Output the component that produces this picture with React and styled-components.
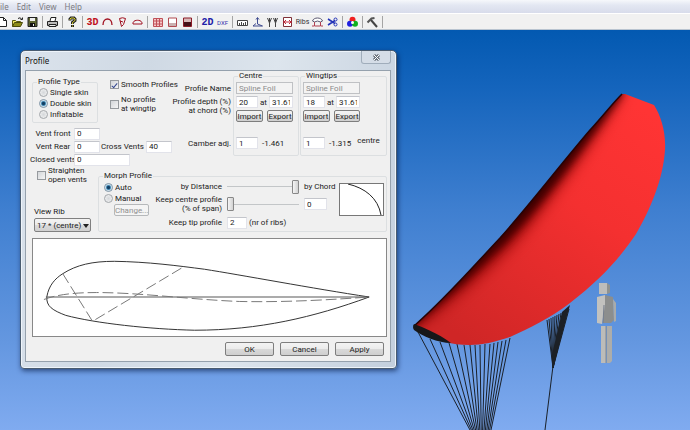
import React from "react";
import styled, { createGlobalStyle } from "styled-components";

const GlobalStyle = createGlobalStyle`
  *, *::before, *::after { box-sizing: border-box; }
  body {
    margin: 0;
    overflow: hidden;
    font-family: Roboto, "Liberation Sans", Arial, sans-serif;
    font-size: 8px;
    line-height: 9px;
    color: #222;
  }
  button, input, select { font: inherit; color: inherit; margin: 0; }
`;

const Page = styled.div`
  display: flex;
  flex-direction: column;
  min-height: 100vh;
`;

const MenuBar = styled.nav`
  display: flex;
  gap: 8px;
  height: 13px;
  padding-bottom: 1px;
  background: linear-gradient(#f6f8fb, #e3e7f2 40%, #d8dceb);
  font-family: "Noto Sans", sans-serif;
  font-size: 8px;
`;

const MenuItem = styled.button`
  border: 0;
  padding: 0;
  background: none;
  color: #7b7b80;
  line-height: 11px;
`;

const Toolbar = styled.div`
  display: flex;
  align-items: center;
  height: 17px;
  padding-top: 1px;
  background: #f1f1f1;
  border-top: 1px solid #fff;
  border-bottom: 1px solid #b9c4d0;
  overflow: hidden;
`;

const ToolButton = styled.button`
  flex: 0 0 15px;
  height: 14px;
  display: flex;
  align-items: center;
  justify-content: center;
  border: 0;
  padding: 0;
  background: none;
  &:first-child { margin-left: -5px; }
  svg { display: block; flex: none; }
`;

const ToolText = styled.span`
  font-family: ${(p) => (p.$mono ? '"Liberation Mono", monospace' : "inherit")};
  font-size: ${(p) => p.$size}px;
  font-weight: ${(p) => (p.$bold ? 700 : 400)};
  color: ${(p) => p.$color};
`;

const Divider = styled.span`
  flex: 0 0 5px;
  height: 12px;
  background: linear-gradient(#a5a5a5, #a5a5a5) 2px 0 / 1px 100% no-repeat;
`;

const Scene = styled.main`
  position: relative;
  flex: 1;
  background: linear-gradient(#0359b1, #1464bc 14%, #3f7fd0 45%, #6497e0 78%, #80abf0);
`;

const Drawing = styled.svg`
  display: block;
  width: 100%;
`;

const Dialog = styled.section`
  position: absolute;
  left: 20px;
  top: 20px;
  width: 377px;
  padding: 0 5px 6px 4px;
  border: 1px solid #4a5c70;
  border-radius: 5px 5px 4px 4px;
  background: linear-gradient(100deg, #dbe3ec, #cfd9e4 30%, #dde5ed 60%, #c3cfdd);
  box-shadow: inset 0 0 0 1px #eef4fa, 1px 2px 5px rgba(0, 20, 60, 0.6);
`;

const TitleBar = styled.header`
  display: flex;
  justify-content: space-between;
  height: 19px;
`;

const Title = styled.h1`
  margin: 0;
  font: 8px/19px "Noto Sans", sans-serif;
  color: #111;
`;

const CloseButton = styled.button`
  width: 30px;
  height: 13px;
  display: grid;
  place-items: center;
  padding: 0;
  border: 1px solid #a0adbb;
  border-top: 0;
  border-radius: 0 0 3px 3px;
  background: #d5dde7;
`;

const Client = styled.form`
  display: flex;
  flex-direction: column;
  padding: 0 3px 5px 6px;
  border: 1px solid #95a1ad;
  background: #f0f0f0;
`;

const Split = styled.div`
  display: flex;
  justify-content: space-between;
`;

const Group = styled.fieldset`
  min-width: 0;
  margin: 0;
  padding: 0 2px;
  border: 1px solid #dcdfe1;
  border-radius: 2px;
`;

const Legend = styled.legend`
  padding: 0 1px;
  margin-left: 2px;
  line-height: 10px;
`;

const Settings = styled.div`
  flex: 1;
  min-width: 0;
  padding-top: 6px;
`;

const TypeRow = styled.div`
  display: flex;
  gap: 12px;
`;

const TypeGroup = styled(Group)`
  flex: none;
  width: 66px;
  height: 46px;
  padding-left: 6px;
  legend { margin-left: -2px; }
`;

const Choice = styled.label`
  display: flex;
  align-items: center;
  gap: 2px;
  min-height: 11px;
  white-space: nowrap;
`;

const Radio = styled.input.attrs({ type: "radio" })`
  appearance: none;
  flex: none;
  width: 9px;
  height: 9px;
  border: 1px solid #a3a7ab;
  border-radius: 50%;
  background: radial-gradient(#d4d7da, #f6f6f6);
  &:checked {
    border-color: #7d93a5;
    background: radial-gradient(circle, #123f63 0 25%, #5a9cc4 45%, #e4eef4 65%);
  }
`;

const Checkbox = styled.input.attrs({ type: "checkbox" })`
  appearance: none;
  flex: none;
  display: grid;
  place-items: center;
  width: 9px;
  height: 9px;
  border: 1px solid #969a9e;
  background: linear-gradient(135deg, #d3d6d9, #f5f5f5);
  &:checked::after {
    content: "";
    width: 3px;
    height: 6px;
    border: solid #33478f;
    border-width: 0 1px 1px 0;
    transform: rotate(40deg);
  }
`;

const Checks = styled.div`
  display: flex;
  flex-direction: column;
  gap: 5px;
  padding-top: 2px;
`;

const Vents = styled.div`
  padding-top: 4px;
`;

const VentRow = styled.div`
  display: flex;
  align-items: center;
  height: 13px;
  white-space: nowrap;
`;

const VentLabel = styled.label`
  display: flex;
  flex: none;
  justify-content: center;
  width: 42px;
`;

const CrossLabel = styled.label`
  flex: none;
  width: 46px;
  padding-right: 2px;
  text-align: right;
`;

const Field = styled.input`
  flex: none;
  width: ${(p) => p.$w}px;
  height: 12px;
  padding: 0 2px;
  border: 1px solid #e2e3ea;
  border-top-color: #c3c5cb;
  border-radius: 0;
  background: #fff;
  &:disabled {
    border-color: #bfc1c4;
    background: #f3f3f3;
    color: #8b8b8b;
  }
`;

const Foils = styled.div`
  display: flex;
  flex: none;
  gap: 1px;
`;

const FoilLabels = styled.div`
  display: flex;
  flex-direction: column;
  align-items: flex-end;
  padding: 13px 1px 0 0;
  text-align: right;
  white-space: nowrap;
`;

const FoilLabel = styled.span`
  min-height: ${(p) => p.$h}px;
`;

const Foil = styled(Group)`
  flex: none;
  width: ${(p) => p.$w}px;
  height: 85px;
`;

const FoilRow = styled.div`
  display: flex;
  align-items: center;
  justify-content: space-between;
  width: 57px;
  height: 14px;
`;

const CamberRow = styled(FoilRow)`
  justify-content: flex-start;
  gap: 4px;
  width: auto;
  margin-top: 13px;
`;

const CentreNote = styled.span`
  align-self: flex-start;
  margin-left: 2px;
`;

const PushButton = styled.button`
  min-width: ${(p) => p.$w}px;
  height: ${(p) => (p.$tall ? 14 : 12)}px;
  padding: 0;
  border: 1px solid #7e7e7e;
  border-radius: 2px;
  background: linear-gradient(#f3f3f3, #ebebeb 50%, #d9d9d9 50%, #cfcfcf);
  line-height: 9px;
  &:disabled {
    border-color: #b5b8ba;
    background: #f4f4f4;
    color: #909090;
  }
`;

const Side = styled.div`
  display: flex;
  flex-direction: column;
  justify-content: space-between;
  width: 66px;
`;

const StraightenBox = styled.div`
  padding-left: 5px;
`;

const RibPicker = styled.label`
  display: block;
  padding-left: 2px;
`;

const SelectShell = styled.span`
  position: relative;
  display: block;
  width: 57px;
  margin-top: 2px;
  &::after {
    content: "";
    position: absolute;
    right: 2px;
    top: 6px;
    border: 3px solid transparent;
    border-top: 4px solid #222;
    border-bottom: 0;
    pointer-events: none;
  }
`;

const Select = styled.select`
  appearance: none;
  display: block;
  width: 100%;
  height: 14px;
  padding: 0 2px;
  border: 1px solid #808080;
  border-radius: 2px;
  background: linear-gradient(#f3f3f3, #ebebeb 50%, #dadada 50%, #d0d0d0);
`;

const Morph = styled(Group)`
  flex: 1;
  height: 61px;
  margin-top: 5px;
`;

const MorphBody = styled.div`
  display: flex;
  gap: 5px;
  padding: 0 0 0 3px;
`;

const Modes = styled.div`
  padding-top: 1px;
  margin-right: auto;
  button { margin-left: 10px; }
`;

const MorphGrid = styled.div`
  display: grid;
  grid-template-columns: auto 72px 30px;
  grid-template-rows: 11px 24px 13px;
  align-items: center;
  column-gap: 5px;
  white-space: nowrap;
`;

const GridLabel = styled.label`
  text-align: right;
`;

const Slider = styled.input.attrs({ type: "range" })`
  appearance: none;
  width: 72px;
  height: 13px;
  background: linear-gradient(#c3c6c8, #c3c6c8) 0 50% / 100% 1px no-repeat;
  &::-webkit-slider-thumb {
    appearance: none;
    width: 7px;
    height: 14px;
    border: 1px solid #888;
    border-radius: 1px;
    background: linear-gradient(90deg, #f5f5f5, #d2d2d2);
  }
`;

const TipRow = styled.span`
  grid-column: 2 / 4;
  display: flex;
  align-items: center;
  gap: 2px;
`;

const CurveBox = styled.svg`
  flex: none;
  width: 45px;
  height: 33px;
  margin-top: 2px;
  border: 1px solid #777;
  background: #fff;
`;

const ProfileChart = styled.svg`
  display: block;
  width: 100%;
  margin-top: 6px;
  border: 1px solid #888;
  background: #fff;
`;

const Actions = styled.footer`
  display: flex;
  justify-content: flex-end;
  gap: 6px;
  padding: 5px 3px 0 0;
`;

const Icon = ({ children, w = 13 }) => (
  <svg width={w} height="12" viewBox={`0 0 ${w} 12`} fill="none" stroke="#222" aria-hidden="true">
    {children}
  </svg>
);

const RED = "#a01020";

const tools = [
  ["New", <Icon><path d="M2.5 1.5h5l3 3v6h-8z" fill="#fff" /><path d="M7.5 1.5v3h3" /></Icon>],
  ["Open", <Icon><path d="M1.5 10.500V4.500h3l1 1h4v2" fill="#f0e860" stroke="#5a5a10" /><path d="M1.500 10.500l2-4h8l-2 4z" fill="#8c8c18" stroke="#4a4a08" /><path d="M7 2.500q2-2 4 1M11.500 1.500v2h-2" /></Icon>],
  ["Save", <Icon><path d="M2 1.500h9v9H2z" fill="#5c6430" /><path d="M4 2h5v3H4z" fill="#eee" stroke="none" /><path d="M4 7h5v4H4z" fill="#111" stroke="none" /><path d="M7 8h1v2H7z" fill="#eee" stroke="none" /></Icon>],
  null,
  ["Print", <Icon><path d="M4 5l1-3.500h5L9 5" fill="#fff" /><path d="M1.500 5.500h10v4h-10z" fill="#bbb" /><path d="M3 8.500h7v2H3z" fill="#eee" /></Icon>],
  null,
  ["Help", <Icon><path d="M4 4.500V3l1-1h3l1 1v1.500L6.500 6.500V8M6.500 9v2" stroke="#222" strokeWidth="3" /><path d="M4 4V3l1-1h3l1 1v1.500L6.500 6.500V8M6.500 9.500v1" stroke="#d8cf30" strokeWidth="1" /></Icon>],
  null,
  ["3D view", <ToolText $size={10} $bold $mono $color="#c01020">3D</ToolText>],
  ["Arc", <Icon><path d="M2 9c0-8 9-8 9 0" stroke={RED} strokeWidth="1.300" /></Icon>],
  ["Section", <Icon><path d="M3.500 2.500q3-1.500 6 0l-2 6-2 2zM4 5l3 1" stroke={RED} /></Icon>],
  ["Planform", <Icon><path d="M2 8C1 3 12 3 11 8z" stroke={RED} /></Icon>],
  null,
  ["Panels", <Icon><path d="M2.500 2.500h9v8h-9zM2.500 5h9M2.500 8h9M5.500 2.500v8M8.500 2.500v8" fill="#f6c8c8" stroke="#c05058" /></Icon>],
  ["Upper surface", <Icon><path d="M2.500 2h8v8.500h-8z" fill="#fff" stroke="#b04a50" /><path d="M3 7h7v3H3z" fill="#c9b0b0" stroke="none" /></Icon>],
  ["Lower surface", <Icon><path d="M2.500 2h8v8.500h-8z" fill="#d8b8b8" stroke="#8c1c28" /><path d="M3 6h7v4H3z" fill="#451018" stroke="none" /></Icon>],
  null,
  ["2D view", <ToolText $size={10} $bold $mono $color="#2020a8">2D</ToolText>],
  ["DXF export", <ToolText $size={6} $color="#3838b0">DXF</ToolText>],
  null,
  ["Measure", <Icon><path d="M1.500 4.500h10v5h-10zM3.500 7v2M5.500 6v3M7.500 7v2M9.500 6v3" fill="#fff" stroke="#444" /></Icon>],
  ["Axes", <Icon><path d="M6.500 2v6l5 2H2l3-2.500M5 3.500l1.500-2L8 3.500" stroke="#404c90" /></Icon>],
  ["Lines", <Icon><path d="M1.500 2l2 5v4M5.500 2l-2 5M3.500 2v4M7.500 2l2 5v4M11.500 2l-2 5M9.500 2v4" stroke="#444" /></Icon>],
  ["Cells", <Icon><path d="M2.500 1.500h8v9h-8z" fill="#fff" stroke="#803038" /><path d="M2 6h9M5 4L3 6l2 2M8 4l2 2-2 2" stroke="#c02838" /></Icon>],
  ["Ribs", <ToolText $size={7} $color="#333">Ribs</ToolText>],
  ["Canopy", <Icon><path d="M1.500 5c1-4 9-4 10 0l-2 1q-3-2-6 0z" fill="#fff" stroke="#5a5870" /><path d="M3.500 6v4h6V6M1 10h2M10 10h2" stroke="#b04050" /></Icon>],
  ["Cut", <Icon><path d="M2 3l7 4.500M2 9l7-4.500" stroke="#2434b8" strokeWidth="1.500" /><circle cx="9.500" cy="3.500" r="1.500" stroke="#2434b8" /><circle cx="9.500" cy="8.500" r="1.500" stroke="#2434b8" /></Icon>],
  null,
  ["Colours", <Icon><g stroke="none"><circle cx="6.500" cy="3.800" r="3" fill="#f02020" /><circle cx="4" cy="7.800" r="3" fill="#2020e0" /><circle cx="9" cy="7.800" r="3" fill="#10b020" /><circle cx="6.500" cy="6.500" r="1.500" fill="#fff" /></g></Icon>],
  null,
  ["Tools", <Icon><path d="M1.500 6.500l4-4 3-.5" stroke="#555" strokeWidth="2" /><path d="M5 4l6 7" stroke="#444" strokeWidth="2" /></Icon>],
  null,
];

const frontLines = [418, 430, 440, 449, 457, 464, 470, 475, 480, 485, 490, 494, 498, 502, 506, 510];
const frontTops = [332, 339, 342, 343, 344, 345, 345, 345, 345, 344, 344, 343, 342, 341, 340, 338];
const rearLines = [547, 549, 551, 553, 555, 557, 559, 561, 563, 565, 567, 569];

const LEADING_EDGE =
  "M414 326C445 299 470 270 500 238C532 202 560 165 590 130C602 117 612 104 622 94";
const WING = `${LEADING_EDGE}L625 94L654 105C661 116 666 132 665 150C663 180 650 210 636 234C620 258 600 280 570 303C550 318 530 328 510 337C495 342 482 345 470 345C460 345 452 344 446 342Z`;

const Paraglider = () => (
  <Drawing viewBox="0 30 690 400" role="img" aria-label="3D view of the paraglider">
    <defs>
      <linearGradient id="fabric" gradientUnits="userSpaceOnUse" x1="645" y1="110" x2="480" y2="350">
        <stop offset="0" stopColor="#ff3434" />
        <stop offset="0.4" stopColor="#f43030" />
        <stop offset="1" stopColor="#cf2626" />
      </linearGradient>
      <filter id="soft" x="-20%" y="-20%" width="140%" height="140%">
        <feGaussianBlur stdDeviation="8" />
      </filter>
      <filter id="softEdge" x="-20%" y="-20%" width="140%" height="140%">
        <feGaussianBlur stdDeviation="4" />
      </filter>
      <clipPath id="wing"><path d={WING} /></clipPath>
    </defs>
    <g stroke="#1a2029" strokeWidth="1">
      {frontLines.map((x, i) => (
        <line key={x} x1={x} y1={frontTops[i]} x2={470 + i * 1.4} y2="430" />
      ))}
      {rearLines.map((x, i) => (
        <line key={x} x1={x} y1={320 - i} x2="553" y2="368" />
      ))}
      <line x1="553" y1="366" x2="545" y2="430" />
    </g>
    <path d="M562 312L570 305L553 368L552 355Z" fill="#1c2026" />
    <path d={WING} fill="url(#fabric)" />
    <g clipPath="url(#wing)">
      <path d="M404 334C460 294 504 256 534 217C566 176 594 138 622 90L606 76L390 310Z" fill="#8a0000" filter="url(#soft)" />
      <path d="M404 332C456 292 480 266 505 243C540 206 570 166 623 92L600 76L390 310Z" fill="#3a0000" filter="url(#softEdge)" />
    </g>
    <path d={LEADING_EDGE} fill="none" stroke="#260306" strokeWidth="1.500" />
    <path d="M414 324C422 327 438 333 451 343C438 343 422 336 414 330Q412 327 414 324Z" fill="#171719" />
    <g>
      <path d="M607 283L610 285V293L607 294Z" fill="#8e9290" />
      <path d="M599 283h8v11h-8z" fill="#bdbdba" />
      <path d="M605 295L613 297L614 320L611 323H603Z" fill="#8c8e8d" />
      <path d="M613 299L616 303V321L614 322Z" fill="#a9abaa" />
      <path d="M597 297L605 295V305L602 324L597 323Z" fill="#c2c2bf" />
      <path d="M604 305L603 323" stroke="#777f8c" />
      <path d="M601 326h5v37h-5z" fill="#bcbcb9" />
      <path d="M607 326h5v35l-2 2h-3z" fill="#adadaa" />
      <path d="M606 326v37" stroke="#85898c" />
    </g>
  </Drawing>
);

const FoilSettings = ({ name, width, depth, camber, note }) => (
  <Foil $w={width}>
    <Legend>{name}</Legend>
    <FoilRow><Field $w={57} disabled defaultValue="Spline Foil" aria-label={`${name} profile name`} /></FoilRow>
    <FoilRow>
      <Field $w={22} defaultValue={depth} aria-label={`${name} profile depth`} />
      <span>at</span>
      <Field $w={24} defaultValue="31.611" aria-label={`${name} chord`} />
    </FoilRow>
    <FoilRow>
      <PushButton type="button" $w={27}>Import</PushButton>
      <PushButton type="button" $w={26}>Export</PushButton>
    </FoilRow>
    <CamberRow>
      <Field $w={22} defaultValue="1" aria-label={`${name} camber adjustment`} />
      <span>{camber}</span>
      {note && <CentreNote>{note}</CentreNote>}
    </CamberRow>
  </Foil>
);

const ProfileDialog = () => (
  <Dialog role="dialog" aria-labelledby="dialog-title">
    <TitleBar>
      <Title id="dialog-title">Profile</Title>
      <CloseButton type="button" aria-label="Close">
        <svg width="9" height="7" viewBox="0 0 9 7" fill="none" aria-hidden="true">
          <path d="M2 1l5 5M7 1L2 6" stroke="#656d77" strokeWidth="3" />
          <path d="M2 1l5 5M7 1L2 6" stroke="#fff" />
        </svg>
      </CloseButton>
    </TitleBar>
    <Client onSubmit={(e) => e.preventDefault()}>
      <Split>
        <Settings>
          <TypeRow>
            <TypeGroup>
              <Legend>Profile Type</Legend>
              <Choice><Radio name="type" />Single skin</Choice>
              <Choice><Radio name="type" defaultChecked />Double skin</Choice>
              <Choice><Radio name="type" />Inflatable</Choice>
            </TypeGroup>
            <Checks>
              <Choice><Checkbox defaultChecked />Smooth Profiles</Choice>
              <Choice><Checkbox /><span>No profile<br />at wingtip</span></Choice>
            </Checks>
          </TypeRow>
          <Vents>
            <VentRow>
              <VentLabel htmlFor="vent-front">Vent front</VentLabel>
              <Field id="vent-front" $w={26} defaultValue="0" />
            </VentRow>
            <VentRow>
              <VentLabel htmlFor="vent-rear">Vent Rear</VentLabel>
              <Field id="vent-rear" $w={26} defaultValue="0" />
              <CrossLabel htmlFor="cross">Cross Vents</CrossLabel>
              <Field id="cross" $w={26} defaultValue="40" />
            </VentRow>
            <VentRow>
              <VentLabel htmlFor="closed">Closed vents</VentLabel>
              <Field id="closed" $w={56} defaultValue="0" />
            </VentRow>
          </Vents>
        </Settings>
        <Foils>
          <FoilLabels>
            <FoilLabel $h={13}>Profile Name</FoilLabel>
            <FoilLabel $h={42}>Profile depth (%)<br />at chord (%)</FoilLabel>
            <FoilLabel $h={9}>Camber adj.</FoilLabel>
          </FoilLabels>
          <FoilSettings name="Centre" width={66} depth="20" camber="-1.461" />
          <FoilSettings name="Wingtips" width={87} depth="18" camber="-1.315" note="centre" />
        </Foils>
      </Split>
      <Split>
        <Side>
          <StraightenBox>
            <Choice><Checkbox /><span>Straighten<br />open vents</span></Choice>
          </StraightenBox>
          <RibPicker>
            View Rib
            <SelectShell>
              <Select defaultValue="17"><option value="17">17 * (centre)</option></Select>
            </SelectShell>
          </RibPicker>
        </Side>
        <Morph>
          <Legend>Morph Profile</Legend>
          <MorphBody>
            <Modes>
              <Choice><Radio name="morph" defaultChecked />Auto</Choice>
              <Choice><Radio name="morph" />Manual</Choice>
              <PushButton type="button" $w={35} disabled>Change...</PushButton>
            </Modes>
            <MorphGrid>
              <GridLabel htmlFor="distance">by Distance</GridLabel>
              <Slider id="distance" defaultValue="100" />
              <span>by Chord</span>
              <GridLabel htmlFor="keep-centre">Keep centre profile<br />(% of span)</GridLabel>
              <Slider id="keep-centre" defaultValue="0" />
              <Field $w={23} defaultValue="0" aria-label="Centre profile percentage" />
              <GridLabel htmlFor="keep-tip">Keep tip profile</GridLabel>
              <TipRow>
                <Field id="keep-tip" $w={20} defaultValue="2" />
                (nr of ribs)
              </TipRow>
            </MorphGrid>
            <CurveBox viewBox="0 0 43 31" fill="none" stroke="#222" aria-hidden="true">
              <path d="M8 0C25 4 38 14 41 31" />
            </CurveBox>
          </MorphBody>
        </Morph>
      </Split>
      <ProfileChart viewBox="32 239 356 98" fill="none" role="img" aria-label="Rib profile">
        <g stroke="#333">
          <path d="M46 297C48 286 54 279 62 274C76 265 92 261.500 114 261.500C148 262 178 266 205 269.500C240 275 315 289 371 297.500" />
          <path d="M46 297C45 307 52 311 65 316C95 324 150 330 195 331C260 331 315 318 371 297.500" />
        </g>
        <path d="M45 297.500H371" stroke="#555" />
        <path d="M43 300C56 295 74 293 96 293C140 293 190 300 240 302C290 303 335 300 371 297.500M62 274L92 322L184 267" stroke="#777" strokeDasharray="11 4" />
      </ProfileChart>
      <Actions>
        <PushButton type="submit" $w={49} $tall>OK</PushButton>
        <PushButton type="button" $w={49} $tall>Cancel</PushButton>
        <PushButton type="button" $w={49} $tall>Apply</PushButton>
      </Actions>
    </Client>
  </Dialog>
);

const menus = [
  { name: "File", text: "ile" },
  { name: "Edit", text: "Edit" },
  { name: "View", text: "View" },
  { name: "Help", text: "Help" },
];

export default function App() {
  return (
    <>
      <GlobalStyle />
      <Page>
        <MenuBar>
          {menus.map((m) => <MenuItem key={m.name} type="button" aria-label={m.name}>{m.text}</MenuItem>)}
        </MenuBar>
        <Toolbar role="toolbar" aria-label="Main">
          {tools.map((tool, i) =>
            tool ? <ToolButton key={i} type="button" aria-label={tool[0]}>{tool[1]}</ToolButton> : <Divider key={i} />
          )}
        </Toolbar>
        <Scene>
          <Paraglider />
          <ProfileDialog />
        </Scene>
      </Page>
    </>
  );
}
